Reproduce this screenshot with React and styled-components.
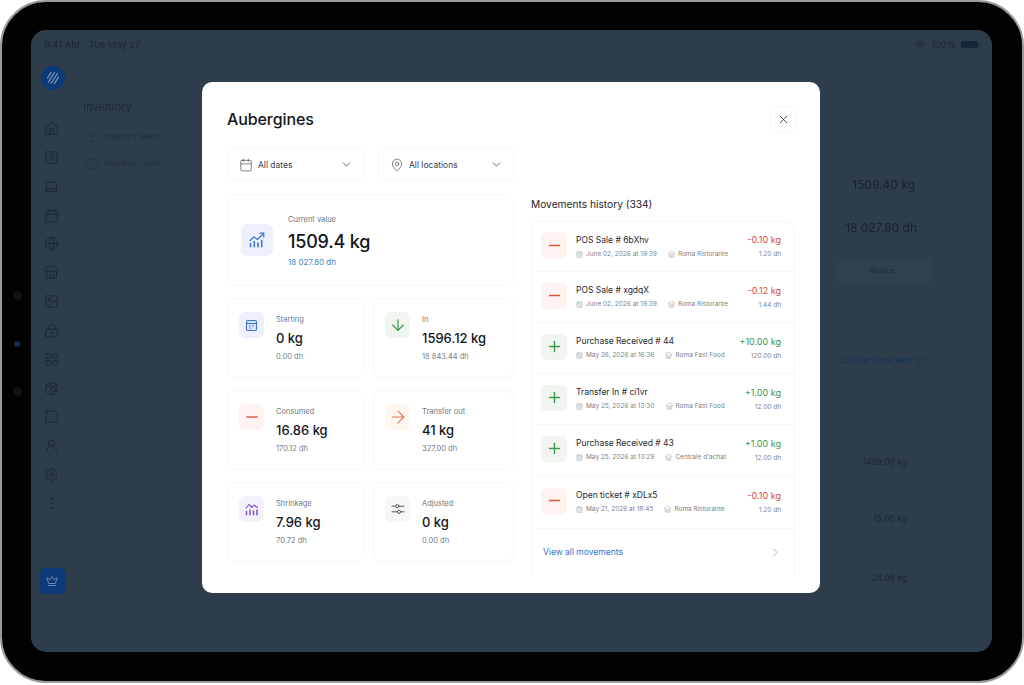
import React from 'react'
import styled, { createGlobalStyle } from 'styled-components'
import {
  Home, SquareChartGantt, Laptop, CalendarDays, Globe, Store, Image, LockKeyhole, LayoutGrid,
  PackagePlus, Dice6, UserRound, Settings, EllipsisVertical, Crown, Wifi, ChevronRight, ChevronDown,
  Star, Calendar, MapPin, X, ArrowDown, ArrowRight, Minus, Plus, Box, Archive, CalendarRange,
} from 'lucide-react'

const GlobalStyle = createGlobalStyle`
  html, body { margin: 0; padding: 0; background: #fff; }
  body { font-family: 'Inter', 'Liberation Sans', sans-serif; color: #14181f; }
  * { box-sizing: border-box; }
`

const Device = styled.div`
  position: relative;
  width: 1024px;
  height: 683px;
  padding: 28px 30px 29px 29px;
  background: #020203;
  border: 2px solid #9a9a9c;
  border-radius: 46px;
  overflow: hidden;
`
const Sensor = styled.span`
  position: absolute;
  left: ${p => p.$left || 11}px;
  top: ${p => p.$top}px;
  width: ${p => p.$size || 9}px;
  height: ${p => p.$size || 9}px;
  border-radius: 50%;
  background: ${p => p.$color || '#111214'};
`
const Screen = styled.div`
  position: relative;
  width: 100%;
  height: 100%;
  background: #2e3d4c;
  border-radius: 15px;
  overflow: hidden;
`
const Backdrop = styled.div`
  width: 100%;
  height: 100%;
  display: flex;
  flex-direction: column;
  filter: blur(0.4px);
  color: #172231;
`
const StatusBar = styled.div`
  height: 28px;
  flex: none;
  padding: 1px 14px 0 13px;
  display: flex;
  align-items: center;
  justify-content: space-between;
  font-size: 9.4px;
  color: #1a2635;
`
const StatusGroup = styled.div`
  display: flex;
  align-items: center;
  gap: ${p => p.$gap || 5}px;
`
const Battery = styled.span`
  position: relative;
  width: 17px;
  height: 7px;
  border-radius: 1.5px;
  background: #14263c;
  &::after {
    content: '';
    position: absolute;
    right: -2px;
    top: 2px;
    width: 1px;
    height: 3px;
    background: #14263c;
  }
`
const Columns = styled.div`
  flex: 1;
  display: flex;
  min-height: 0;
`
const Rail = styled.div`
  width: 44px;
  flex: none;
  padding: 8px 0 58px 0;
  display: flex;
  flex-direction: column;
  align-items: center;
  color: #142033;
`
const Logo = styled.div`
  width: 24px;
  height: 24px;
  border-radius: 50%;
  background: #0c3a78;
  display: flex;
  align-items: center;
  justify-content: center;
  flex: none;
`
const RailIcons = styled.div`
  margin-top: 31px;
  display: flex;
  flex-direction: column;
  align-items: center;
  gap: 13.85px;
  margin-right: 3px;
`
const CrownButton = styled.div`
  margin-top: auto;
  margin-right: 2px;
  width: 25px;
  height: 26px;
  border-radius: 5px;
  background: #0c3a78;
  color: #8aa0bf;
  display: flex;
  align-items: center;
  justify-content: center;
`
const SubNav = styled.div`
  width: 116px;
  flex: none;
  padding: 42px 0 0 8px;
`
const SubTitle = styled.div`
  font-size: 11px;
  color: #1b2837;
  margin-bottom: 9px;
`
const SubRow = styled.div`
  height: 27px;
  display: flex;
  align-items: center;
  gap: 6px;
  font-size: 7.5px;
  color: #1f2d3d;
  padding-left: 3px;
`
const SubLabel = styled.span`
  flex: 1;
`
const BackMain = styled.div`
  flex: 1;
  display: flex;
  justify-content: flex-end;
`
const BackPanel = styled.div`
  width: 157px;
  padding: 89px 60px 0 0;
  display: flex;
  flex-direction: column;
  align-items: flex-end;
`
const BackChevron = styled.div`
  color: #243243;
  height: 14px;
`
const BigFigure = styled.div`
  font-size: 12px;
  line-height: 14px;
  color: #172231;
  margin-top: ${p => p.$top}px;
  margin-right: ${p => p.$right}px;
`
const ReduceButton = styled.div`
  width: 97px;
  height: 23px;
  margin-top: 24px;
  background: #304050;
  font-size: 7px;
  color: #1d2b3a;
  padding-right: 3px;
  display: flex;
  align-items: center;
  justify-content: center;
`
const AlertLink = styled.div`
  margin-top: 73px;
  margin-right: 7px;
  display: flex;
  align-items: center;
  gap: 4px;
  font-size: 8px;
  white-space: nowrap;
  color: #0f2f5e;
`
const StockRow = styled.div`
  height: 14px;
  margin-top: ${p => p.$top}px;
  margin-right: -4px;
  display: flex;
  align-items: center;
  gap: 19px;
  font-size: 8.5px;
  color: #192534;
`

const Overlay = styled.div`
  position: absolute;
  inset: 0;
  padding: 0 1px 7px 0;
  display: flex;
  align-items: center;
  justify-content: center;
`
const Modal = styled.div`
  width: 618px;
  height: 511px;
  padding: 24px 24px 0 25px;
  background: #fff;
  border-radius: 10px;
  overflow: hidden;
`
const ModalHead = styled.div`
  height: 26px;
  margin-bottom: 15px;
  display: flex;
  align-items: center;
  justify-content: space-between;
`
const Title = styled.h1`
  margin: 0;
  font-size: 16px;
  font-weight: 500;
  letter-spacing: -0.1px;
  color: #12161c;
`
const CloseButton = styled.div`
  width: 26px;
  height: 26px;
  border: 1px solid #f8f8f9;
  border-radius: 5px;
  color: #2f3339;
  display: flex;
  align-items: center;
  justify-content: center;
`
const ModalBody = styled.div`
  display: grid;
  grid-template-columns: 287px 264px;
  column-gap: 17px;
`
const LeftCol = styled.div`
  display: flex;
  flex-direction: column;
  gap: 13px;
`
const Filters = styled.div`
  display: grid;
  grid-template-columns: 137px 136px;
  column-gap: 14px;
`
const Filter = styled.div`
  height: 34px;
  padding: 1px 10px 0 11px;
  border: 1px solid #f7f7f8;
  border-radius: 7px;
  display: flex;
  align-items: center;
  gap: 5px;
  font-size: 8.5px;
  color: #3d424a;
`
const FilterLabel = styled.span`
  flex: 1;
`
const HeroCard = styled.div`
  height: 92px;
  padding: 0 13px;
  border: 1px solid #f7f7f8;
  border-radius: 9px;
  display: flex;
  align-items: center;
  gap: 15px;
`
const IconTile = styled.div`
  width: ${p => p.$w || 25}px;
  height: ${p => p.$h || 26}px;
  flex: none;
  border-radius: ${p => p.$radius || 6}px;
  background: ${p => p.$bg};
  color: ${p => p.$color};
  display: flex;
  align-items: center;
  justify-content: center;
`
const MoveTile = styled(IconTile)`
  margin-top: -3px;
`
const HeroText = styled.div`
  margin-top: 1px;
`
const Label = styled.div`
  font-size: 7.5px;
  line-height: 10px;
  color: #71767d;
`
const HeroValue = styled.div`
  font-size: 18px;
  font-weight: 500;
  line-height: 24px;
  margin-top: 5px;
  letter-spacing: -0.2px;
  color: #12161c;
`
const HeroSub = styled.div`
  font-size: 8px;
  line-height: 10px;
  margin-top: 3px;
  color: #3f7fcf;
`
const StatGrid = styled.div`
  display: grid;
  grid-template-columns: 137px 141px;
  grid-auto-rows: 80px;
  column-gap: 9px;
  row-gap: 12px;
  margin-top: -1px;
`
const StatCard = styled.div`
  padding: 13px 11px;
  border: 1px solid #f7f7f8;
  border-radius: 8px;
  display: flex;
  gap: 12px;
`
const StatText = styled.div`
  min-width: 0;
  margin-top: 3px;
`
const StatValue = styled.div`
  font-size: 13px;
  font-weight: 500;
  line-height: 17px;
  margin-top: 5px;
  white-space: nowrap;
  color: #12161c;
`
const StatSub = styled.div`
  font-size: 7.5px;
  line-height: 10px;
  margin-top: 5px;
  color: #777c83;
`
const RightCol = styled.div`
  padding-top: 50px;
`
const ListTitle = styled.h2`
  margin: 0 0 10px;
  font-size: 10.2px;
  font-weight: 400;
  line-height: 14px;
  color: #1d2229;
`
const MoveList = styled.div`
  border: 1px solid #f7f7f8;
  border-bottom: none;
  border-radius: 8px 8px 0 0;
`
const MoveRow = styled.div`
  height: 51px;
  padding: 0 13px 0 9px;
  border-bottom: 1px solid #f6f6f7;
  display: flex;
  align-items: center;
  gap: 9px;
  &:first-child { height: 50px; }
  &:nth-child(6) { height: 53px; }
`
const MoveMain = styled.div`
  flex: 1;
  min-width: 0;
`
const MoveTitle = styled.div`
  font-size: 8.5px;
  line-height: 11px;
  color: #24282f;
`
const MoveMeta = styled.div`
  margin-top: 4px;
  display: flex;
  align-items: center;
  gap: 3px;
  font-size: 6.5px;
  line-height: 9px;
  color: #7d8187;
  white-space: nowrap;
`
const MetaPlace = styled.span`
  display: flex;
  align-items: center;
  gap: 3px;
  margin-left: 8px;
`
const MoveSide = styled.div`
  text-align: right;
  flex: none;
`
const MoveQty = styled.div`
  font-size: 9px;
  line-height: 11px;
  color: ${p => (p.$plus ? '#43964c' : '#d44a3e')};
`
const MoveCost = styled.div`
  margin-top: 5px;
  font-size: 6.5px;
  line-height: 9px;
  color: #7d8187;
`
const ViewAll = styled.div`
  height: 46px;
  padding: 0 12px 0 11px;
  display: flex;
  align-items: center;
  justify-content: space-between;
  font-size: 8.5px;
  color: #2f74cc;
`

const railIcons = [Home, SquareChartGantt, Laptop, CalendarDays, Globe, Store, Image, LockKeyhole, LayoutGrid, PackagePlus, Dice6, UserRound, Settings, EllipsisVertical]

const TrendIcon = ({ size = 18 }) => (
  <svg width={size} height={size} viewBox="0 0 18 18" fill="none" stroke="currentColor" strokeWidth="1.3" strokeLinecap="round" strokeLinejoin="round">
    <path d="M2 9.5l4-3.5 3.5 2.5L15.5 2.5" />
    <path d="M12 2.2h3.7v3.6" />
    <path d="M2.5 12.5v3.3M6.3 10.5v5.3M10 12v3.8M13.7 9.5v6.3" strokeWidth="1.6" />
  </svg>
)
const ZigzagIcon = () => (
  <svg width="14" height="14" viewBox="0 0 14 14" fill="none" stroke="currentColor" strokeWidth="1.1" strokeLinecap="round" strokeLinejoin="round">
    <path d="M1 6l3-3.5 3 3 2-2.5 3.5 2.5" />
    <path d="M1.5 9.5v3.2M5 8v4.7M8.5 9v3.7M12 8v4.7" strokeWidth="1.5" />
  </svg>
)
const SlidersIcon = () => (
  <svg width="14" height="14" viewBox="0 0 14 14" fill="none" stroke="currentColor" strokeWidth="1" strokeLinecap="round">
    <path d="M1 4.2h3.6M8 4.2h5M1 9.8h5.4M9.6 9.8H13" />
    <circle cx="6.3" cy="4.2" r="1.6" />
    <circle cx="8" cy="9.8" r="1.6" />
  </svg>
)
const CalendarTile = () => (
  <svg width="13" height="13" viewBox="0 0 13 13" fill="#dbe6fa" stroke="currentColor" strokeWidth="1.1" strokeLinejoin="round">
    <rect x="1.5" y="1.5" width="10" height="10" rx="1.4" />
    <path d="M1.5 4.5h10" fill="none" />
    <path d="M4 7h1.6M7.2 7H9M4 9h1.6" fill="none" strokeWidth="0.9" />
  </svg>
)

const stats = [
  { label: 'Starting', value: '0 kg', sub: '0.00 dh', bg: '#eef1fd', color: '#3f72c9', icon: <CalendarTile /> },
  { label: 'In', value: '1596.12 kg', sub: '18 843.44 dh', bg: '#f1f5f0', color: '#3f9a4a', icon: <ArrowDown size={18} strokeWidth={1.6} /> },
  { label: 'Consumed', value: '16.86 kg', sub: '170.12 dh', bg: '#fef3f1', color: '#d8644f', icon: <Minus size={18} strokeWidth={1.7} /> },
  { label: 'Transfer out', value: '41 kg', sub: '327.00 dh', bg: '#fef7f0', color: '#df7657', icon: <ArrowRight size={20} strokeWidth={1.3} /> },
  { label: 'Shrinkage', value: '7.96 kg', sub: '70.72 dh', bg: '#f3f1fa', color: '#8a4fc0', icon: <ZigzagIcon /> },
  { label: 'Adjusted', value: '0 kg', sub: '0.00 dh', bg: '#f5f6f6', color: '#555a60', icon: <SlidersIcon /> },
]

const moves = [
  { title: 'POS Sale # 6bXhv', date: 'June 02, 2026 at 19:39', place: 'Roma Ristorante', qty: '-0.10 kg', cost: '1.20 dh' },
  { title: 'POS Sale # xgdqX', date: 'June 02, 2026 at 19:39', place: 'Roma Ristorante', qty: '-0.12 kg', cost: '1.44 dh' },
  { title: 'Purchase Received # 44', date: 'May 26, 2026 at 16:36', place: 'Roma Fast Food', qty: '+10.00 kg', cost: '120.00 dh', plus: true },
  { title: 'Transfer In # ci1vr', date: 'May 25, 2026 at 13:30', place: 'Roma Fast Food', qty: '+1.00 kg', cost: '12.00 dh', plus: true },
  { title: 'Purchase Received # 43', date: 'May 25, 2026 at 13:29', place: "Centrale d'achat", qty: '+1.00 kg', cost: '12.00 dh', plus: true },
  { title: 'Open ticket # xDLx5', date: 'May 21, 2026 at 18:45', place: 'Roma Ristorante', qty: '-0.10 kg', cost: '1.20 dh' },
]

const App = () => (
  <>
    <GlobalStyle />
    <Device>
      <Sensor $top={289} />
      <Sensor $top={339} $left={12} $size={6} $color="#0c2a5c" />
      <Sensor $top={385} />
      <Screen>
        <Backdrop>
          <StatusBar>
            <StatusGroup $gap={9}><span>9:41 AM</span><span>Tue May 27</span></StatusGroup>
            <StatusGroup>
              <Wifi size={11} strokeWidth={2} />
              <span>100%</span>
              <Battery />
            </StatusGroup>
          </StatusBar>
          <Columns>
            <Rail>
              <Logo>
                <svg width="14" height="14" viewBox="0 0 14 14" stroke="#7f96b8" strokeWidth="1.3" strokeLinecap="round">
                  <path d="M1.5 7L5 1.5M2.5 11L8.5 1.5M5 12.5L11.5 2.5M8.5 12.5L12.5 6" />
                </svg>
              </Logo>
              <RailIcons>
                {railIcons.map((Icon, i) => <Icon key={i} size={15} strokeWidth={1.2} />)}
              </RailIcons>
              <CrownButton><Crown size={12} strokeWidth={1.5} /></CrownButton>
            </Rail>
            <SubNav>
              <SubTitle>Inventory</SubTitle>
              <SubRow><Box size={12} strokeWidth={0.8} /><SubLabel>Inventory board</SubLabel><ChevronRight size={9} strokeWidth={0.8} color="#29394a" /></SubRow>
              <SubRow><Archive size={12} strokeWidth={0.8} /><SubLabel>Inventory count</SubLabel><ChevronRight size={9} strokeWidth={0.8} color="#29394a" /></SubRow>
            </SubNav>
            <BackMain>
              <BackPanel>
                <BackChevron><ChevronRight size={10} strokeWidth={1} /></BackChevron>
                <BigFigure $top={17} $right={17}>1509.40 kg</BigFigure>
                <BigFigure $top={29} $right={15}>18 027.80 dh</BigFigure>
                <ReduceButton>Reduce</ReduceButton>
                <AlertLink>Edit low stock alert <Star size={9} strokeWidth={1.4} /></AlertLink>
                <StockRow $top={90}>1469.00 kg<ChevronRight size={10} strokeWidth={0.8} /></StockRow>
                <StockRow $top={43}>15.00 kg<ChevronRight size={10} strokeWidth={0.8} /></StockRow>
                <StockRow $top={45}>24.06 kg<ChevronRight size={10} strokeWidth={0.8} /></StockRow>
              </BackPanel>
            </BackMain>
          </Columns>
        </Backdrop>
        <Overlay>
          <Modal>
            <ModalHead>
              <Title>Aubergines</Title>
              <CloseButton><X size={13} strokeWidth={1.5} /></CloseButton>
            </ModalHead>
            <ModalBody>
              <LeftCol>
                <Filters>
                  <Filter>
                    <Calendar size={14} strokeWidth={1.1} />
                    <FilterLabel>All dates</FilterLabel>
                    <ChevronDown size={13} strokeWidth={1.5} />
                  </Filter>
                  <Filter>
                    <MapPin size={14} strokeWidth={1.1} />
                    <FilterLabel>All locations</FilterLabel>
                    <ChevronDown size={13} strokeWidth={1.5} />
                  </Filter>
                </Filters>
                <HeroCard>
                  <IconTile $w={32} $h={32} $radius={7} $bg="#eef1fd" $color="#3f78d0"><TrendIcon /></IconTile>
                  <HeroText>
                    <Label>Current value</Label>
                    <HeroValue>1509.4 kg</HeroValue>
                    <HeroSub>18 027.80 dh</HeroSub>
                  </HeroText>
                </HeroCard>
                <StatGrid>
                  {stats.map(s => (
                    <StatCard key={s.label}>
                      <IconTile $bg={s.bg} $color={s.color}>{s.icon}</IconTile>
                      <StatText>
                        <Label>{s.label}</Label>
                        <StatValue>{s.value}</StatValue>
                        <StatSub>{s.sub}</StatSub>
                      </StatText>
                    </StatCard>
                  ))}
                </StatGrid>
              </LeftCol>
              <RightCol>
                <ListTitle>Movements history (334)</ListTitle>
                <MoveList>
                  {moves.map(m => (
                    <MoveRow key={m.title}>
                      <MoveTile $w={26} $radius={5} $bg={m.plus ? '#f1f5f0' : '#fef3f1'} $color={m.plus ? '#3f9a4a' : '#d9543f'}>
                        {m.plus ? <Plus size={17} strokeWidth={2} /> : <Minus size={17} strokeWidth={2} />}
                      </MoveTile>
                      <MoveMain>
                        <MoveTitle>{m.title}</MoveTitle>
                        <MoveMeta>
                          <CalendarRange size={7} strokeWidth={1.2} />
                          {m.date}
                          <MetaPlace><Store size={7} strokeWidth={1.2} />{m.place}</MetaPlace>
                        </MoveMeta>
                      </MoveMain>
                      <MoveSide>
                        <MoveQty $plus={m.plus}>{m.qty}</MoveQty>
                        <MoveCost>{m.cost}</MoveCost>
                      </MoveSide>
                    </MoveRow>
                  ))}
                  <ViewAll>
                    View all movements
                    <ChevronRight size={13} strokeWidth={1.2} color="#6f8fbf" />
                  </ViewAll>
                </MoveList>
              </RightCol>
            </ModalBody>
          </Modal>
        </Overlay>
      </Screen>
    </Device>
  </>
)

export default App
